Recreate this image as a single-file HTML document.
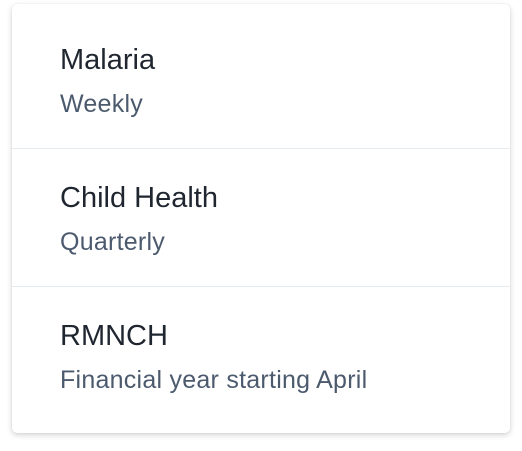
<!DOCTYPE html>
<html><head><style>
body{margin:0;background:#fff;width:522px;height:451px;overflow:hidden;font-family:"Liberation Sans",sans-serif}
.card{position:absolute;left:12px;top:4px;width:498px;height:429px;background:#fff;border-radius:5px;box-shadow:0 2px 6px rgba(0,0,0,.18),0 0 1px rgba(0,0,0,.12)}
.t{position:absolute;left:48px;font-size:29px;color:#1f2630;white-space:nowrap}
.s{position:absolute;left:48px;font-size:25px;letter-spacing:0.25px;color:#4c5a6e;white-space:nowrap}
.hr{position:absolute;left:0;width:498px;height:1px;background:#e6ebf0}
</style></head><body>
<div class="card">
<div class="t" style="top:40px">Malaria</div>
<div class="s" style="top:86px">Weekly</div>
<div class="hr" style="top:144px"></div>
<div class="t" style="top:178px">Child Health</div>
<div class="s" style="top:224px">Quarterly</div>
<div class="hr" style="top:282px"></div>
<div class="t" style="top:316px">RMNCH</div>
<div class="s" style="top:362px">Financial year starting April</div>
</div>
</body></html>
